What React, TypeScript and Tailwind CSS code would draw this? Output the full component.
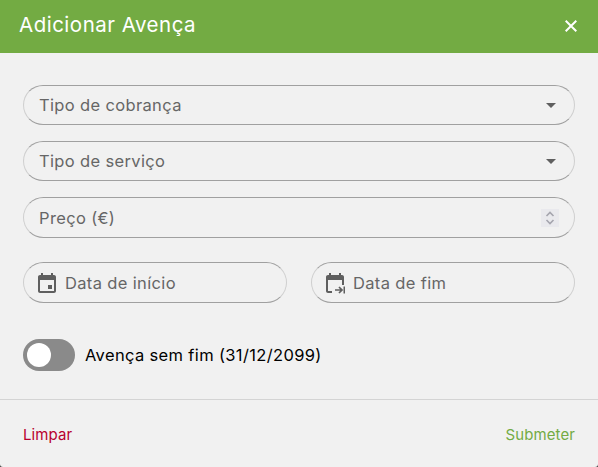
import React from 'react';

const font = 'font-["Inter","Liberation_Sans",sans-serif]';

const Caret = () => (
  <svg width="24" height="24" viewBox="0 0 24 24" fill="#5f5f5f">
    <path d="M7 10l5 5 5-5z" />
  </svg>
);

const CalendarStart = () => (
  <svg width="24" height="24" viewBox="0 0 24 24" fill="#5f5f5f">
    <path d="M19 4h-1V2h-2v2H8V2H6v2H5c-1.100 0-2 .9-2 2v14c0 1.100.9 2 2 2h14c1.100 0 2-.9 2-2V6c0-1.100-.9-2-2-2zm0 16H5V9h14v11zm-6-6h4v4h-4z" />
  </svg>
);

const CalendarEnd = () => (
  <svg width="24" height="24" viewBox="0 0 24 24" fill="#5f5f5f">
    <path d="M19 4h-1V2h-2v2H8V2H6v2H5c-1.100 0-2 .9-2 2v14c0 1.100.9 2 2 2h4v-2H5V9h14v5h2V6c0-1.100-.9-2-2-2z" />
    <path d="M12 19h7M16 16l3 3-3 3" fill="none" stroke="#5f5f5f" strokeWidth="1.700" />
    <path d="M20.500 15.500H22v7h-1.500z" />
  </svg>
);

// pill shaped input
const Field = ({
  label,
  right,
  left,
  className,
}: {
  label: string;
  right?: React.ReactNode;
  left?: React.ReactNode;
  className: string;
}) => (
  <div className={`flex items-center rounded-full border border-y-[#a0a0a0] border-x-[#cfcfcf] ${className}`}>
    {left && <span className="mr-[6px] flex">{left}</span>}
    <span className="flex-1 pt-[1px] text-[16.5px] tracking-[0.35px] text-[#666666]">{label}</span>
    {right}
  </div>
);

const App = () => {
  return (
    <div className="h-[467px] w-[598px] bg-[#444444]">
      <div className={`h-[467px] overflow-hidden rounded-b-[3px] bg-[#f1f1f1] ${font}`}>
        {/* Cabeçalho */}
        <div className="flex h-[53px] items-center justify-between bg-[#73ab43] pb-[2px] pl-[19px] pr-[21px]">
          <h1 className="text-[20.5px] font-normal tracking-[0.5px] text-white">Adicionar Avença</h1>
          <svg width="12" height="12" viewBox="0 0 12 12" fill="none" stroke="white" strokeWidth="2">
            <path d="M.7.7l10.600 10.600M11.300.7L.7 11.300" />
          </svg>
        </div>

        <div className="flex flex-col px-[23px] pt-[32px]">
          <div className="flex flex-col gap-[16px]">
            <Field className="h-[40px] pl-[15px] pr-[11px]" label="Tipo de cobrança" right={<Caret />} />
            <Field className="h-[40px] pl-[15px] pr-[11px]" label="Tipo de serviço" right={<Caret />} />
            <Field
              className="h-[41px] pl-[15px] pr-[15px]"
              label="Preço (€)"
              right={
                <span className="flex h-[18px] w-[18px] items-center justify-center bg-[#e9e9ed]">
                  <svg width="12" height="16" viewBox="0 0 12 16" fill="none" stroke="#a5a5ae" strokeWidth="1.600">
                    <path d="M2.500 6L6 2.500 9.500 6M2.500 10L6 13.500 9.500 10" />
                  </svg>
                </span>
              }
            />
          </div>

          <div className="mt-[24px] flex gap-[24px]">
            <Field className="h-[41px] flex-1 pl-[11px] pr-[15px]" label="Data de início" left={<CalendarStart />} />
            <Field className="h-[41px] flex-1 pl-[11px] pr-[15px]" label="Data de fim" left={<CalendarEnd />} />
          </div>

          <div className="mt-[36px] flex items-center gap-[10px]">
            <div className="flex h-[32px] w-[52px] items-center rounded-full bg-[#8a8a8a] pl-[4px]">
              <div className="h-[24px] w-[24px] rounded-full bg-white" />
            </div>
            <span className="text-[16.5px] tracking-[0.35px] text-black">Avença sem fim (31/12/2099)</span>
          </div>
        </div>

        {/* Rodapé */}
        <div className="mt-[28px] flex h-[68px] items-center justify-between border-t border-[#d4d4d4] px-[23px] pt-[3px] text-[15px] tracking-[0.1px]">
          <button className="text-[#b8002e]">Limpar</button>
          <button className="text-[#73ab43]">Submeter</button>
        </div>
      </div>
    </div>
  );
};

export default App;
